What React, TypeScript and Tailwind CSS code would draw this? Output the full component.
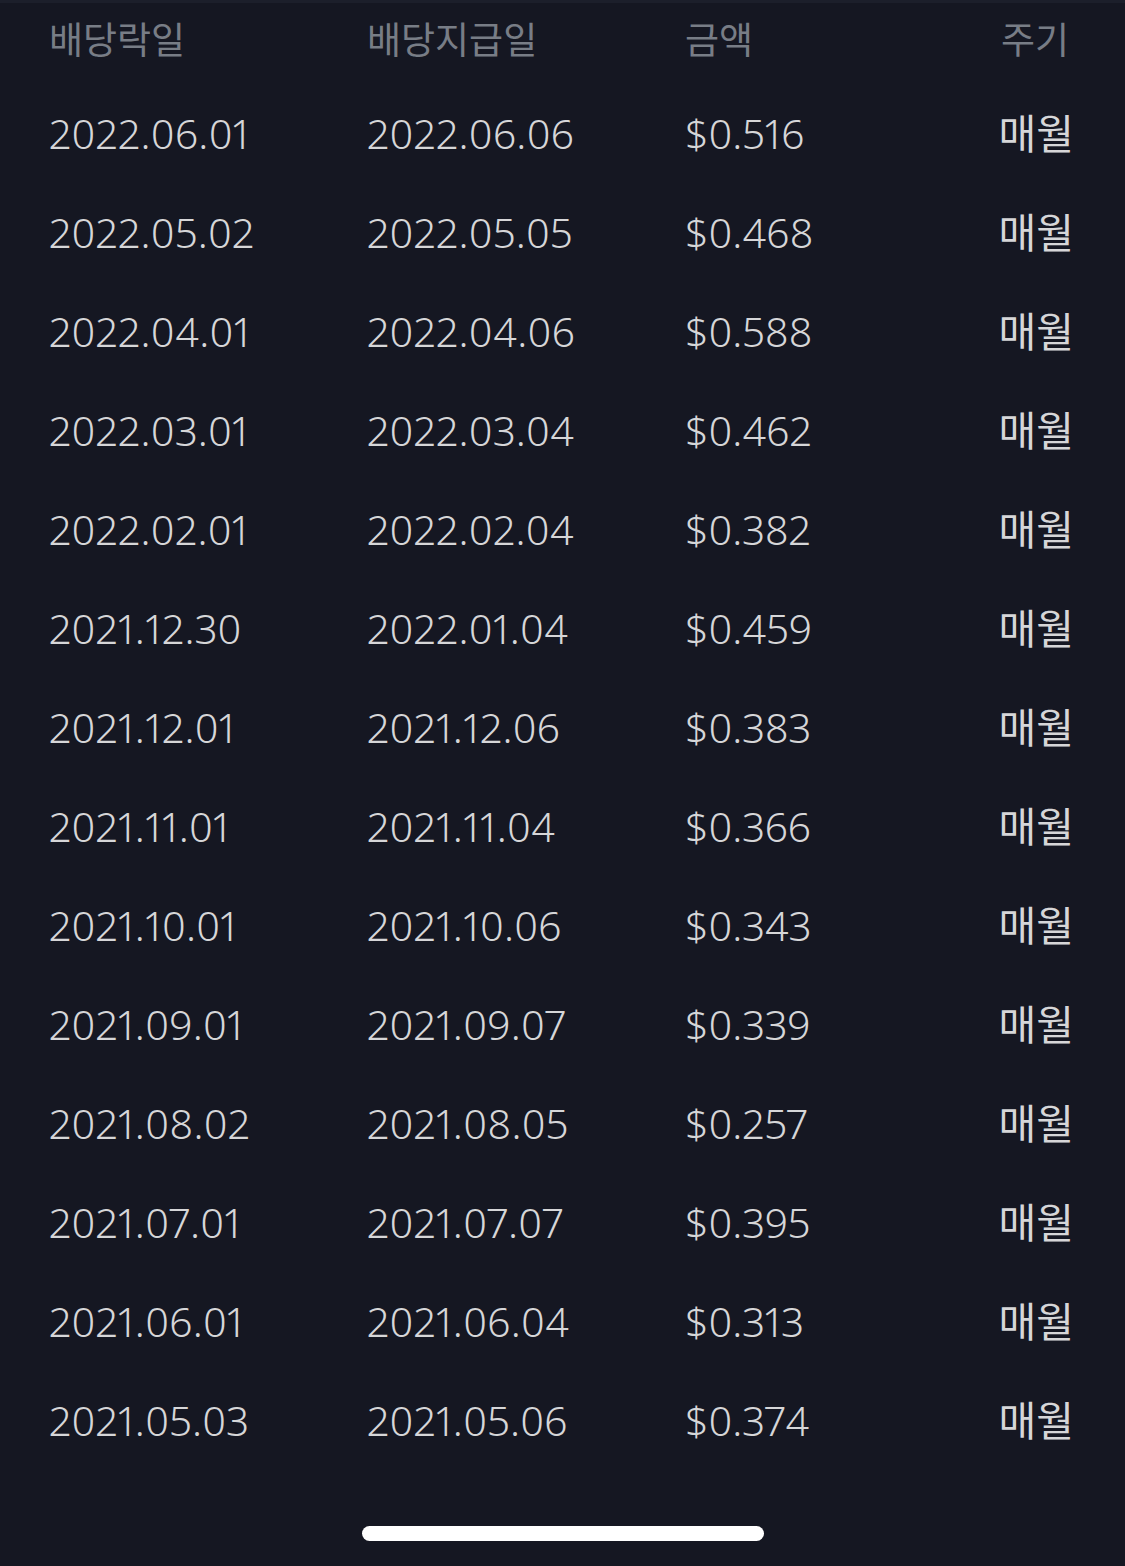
const rows: [string, string, string][] = [
  ["2022.06.01", "2022.06.06", "$0.516"],
  ["2022.05.02", "2022.05.05", "$0.468"],
  ["2022.04.01", "2022.04.06", "$0.588"],
  ["2022.03.01", "2022.03.04", "$0.462"],
  ["2022.02.01", "2022.02.04", "$0.382"],
  ["2021.12.30", "2022.01.04", "$0.459"],
  ["2021.12.01", "2021.12.06", "$0.383"],
  ["2021.11.01", "2021.11.04", "$0.366"],
  ["2021.10.01", "2021.10.06", "$0.343"],
  ["2021.09.01", "2021.09.07", "$0.339"],
  ["2021.08.02", "2021.08.05", "$0.257"],
  ["2021.07.01", "2021.07.07", "$0.395"],
  ["2021.06.01", "2021.06.04", "$0.313"],
  ["2021.05.03", "2021.05.06", "$0.374"],
];

const App = () => {
  return (
    <div
      className="w-[1125px] h-[1566px] bg-[#151722] flex flex-col font-light [font-variant-numeric:proportional-nums]"
      style={{ fontFamily: '"Noto Sans", "Noto Sans CJK KR", sans-serif' }}
    >
      <div className="h-[3px] bg-[#1c1f2b]" />
      <div className="grid grid-cols-[318px_318px_1fr_auto] items-center h-[74px] pl-[49px] pr-[56px] text-[37px] font-normal text-[#787d86]">
        <span>배당락일</span>
        <span>배당지급일</span>
        <span>금액</span>
        <span>주기</span>
      </div>
      <div className="mt-[7px] flex flex-col">
        {rows.map((r, i) => (
          <div
            key={i}
            className="grid grid-cols-[318px_318px_1fr_auto] items-center h-[99px] pl-[49px] pr-[51px] text-[41px] text-[#d6d6d8]"
          >
            <span className="tracking-[0.3px]">{r[0]}</span>
            <span className="tracking-[0.3px]">{r[1]}</span>
            <span>{r[2]}</span>
            <span className="font-normal">매월</span>
          </div>
        ))}
      </div>
      <div className="flex-1" />
      <div className="flex justify-center pb-[25px]">
        <div className="w-[402px] h-[15px] rounded-full bg-white" />
      </div>
    </div>
  );
};

export default App;
